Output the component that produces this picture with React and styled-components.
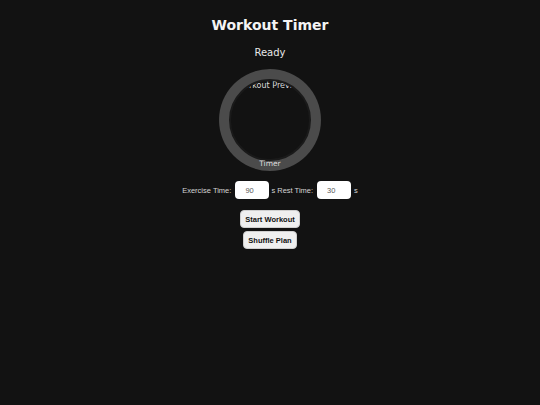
import React from "react";
import styled, { createGlobalStyle } from "styled-components";

const Global = createGlobalStyle`
  html, body { margin: 0; padding: 0; background: #121212; }
  body { width: 540px; height: 405px; overflow: hidden; color: #f2f2f2; }
  input[type=number]::-webkit-inner-spin-button,
  input[type=number]::-webkit-outer-spin-button { -webkit-appearance: none; margin: 0; }
`;

const Page = styled.div`
  display: flex;
  flex-direction: column;
  align-items: center;
  padding-top: 16px;
  font-family: "DejaVu Sans", Verdana, sans-serif;
`;

const Title = styled.h1`
  margin: 0;
  font-size: 14px;
  line-height: 18px;
  font-weight: bold;
  color: #f4f4f4;
`;

const Status = styled.div`
  margin-top: 12px;
  font-size: 10px;
  line-height: 14px;
  color: #e8e8e8;
`;

const Dial = styled.div`
  position: relative;
  margin-top: 9px;
  width: 102px;
  height: 102px;
  box-sizing: border-box;
  padding: 10px;
  border-radius: 50%;
  background: #4b4b4b;
  display: flex;
`;

const Face = styled.div`
  flex: 1;
  border-radius: 50%;
  background: #121212;
  border: 2px solid #1a1a1a;
  overflow: hidden;
  display: flex;
  justify-content: center;
`;

const Preview = styled.span`
  flex-shrink: 0;
  white-space: nowrap;
  font-size: 8px;
  line-height: 10px;
  color: #dcdcdc;
`;

const DialLabel = styled.span`
  position: absolute;
  left: 0;
  right: 0;
  bottom: 2px;
  text-align: center;
  font-size: 7.5px;
  line-height: 10px;
  color: #dcdcdc;
`;

const Row = styled.div`
  margin-top: 10px;
  display: flex;
  align-items: center;
  font-family: "Liberation Sans", Arial, sans-serif;
  font-size: 7.5px;
  color: #d2d2d2;
`;

const Label = styled.span`
  margin: ${(p) => p.$m || "0"};
  white-space: pre;
`;

const NumInput = styled.input`
  width: 34px;
  height: 18px;
  box-sizing: border-box;
  border: none;
  border-radius: 4px;
  background: #fff;
  color: #5a5a5a;
  font-family: "Liberation Sans", Arial, sans-serif;
  font-size: 7.5px;
  padding: 0 0 0 10px;
  outline: none;
`;

const Buttons = styled.div`
  margin-top: 11px;
  display: flex;
  flex-direction: column;
  align-items: center;
  gap: 3px;
`;

const Button = styled.button`
  height: 18px;
  box-sizing: border-box;
  padding: 0 4.5px;
  border: 1px solid #cfcfcf;
  border-radius: 4px;
  background: #efefef;
  color: #111;
  font-family: "Liberation Sans", Arial, sans-serif;
  font-weight: bold;
  font-size: 7.5px;
  cursor: pointer;
`;

export default function App() {
  return (
    <>
      <Global />
      <Page>
        <Title>Workout Timer</Title>
        <Status>Ready</Status>
        <Dial>
          <Face>
            <Preview>Workout Preview</Preview>
          </Face>
          <DialLabel>Timer</DialLabel>
        </Dial>
        <Row>
          <Label $m="0 4px 0 0">Exercise Time:</Label>
          <NumInput type="number" defaultValue={90} />
          <Label $m="0 4px 0 2px">s Rest Time:</Label>
          <NumInput type="number" defaultValue={30} />
          <Label $m="0 0 0 3px">s</Label>
        </Row>
        <Buttons>
          <Button>Start Workout</Button>
          <Button>Shuffle Plan</Button>
        </Buttons>
      </Page>
    </>
  );
}
